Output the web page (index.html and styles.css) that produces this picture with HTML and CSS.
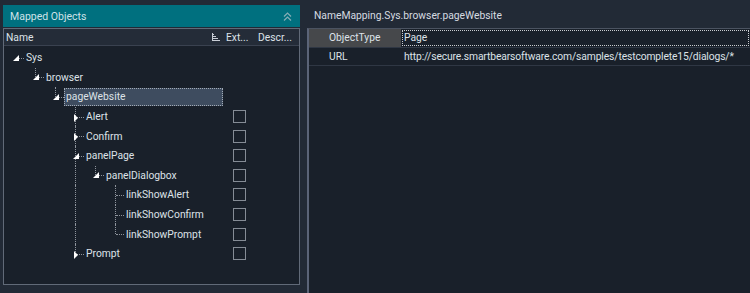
FILE: index.html
```html
<!DOCTYPE html>
<html lang="en">
<head>
    <meta charset="UTF-8">
    <title>Name Mapping</title>
    <link rel="stylesheet" href="styles.css">
</head>
<body>
    <div class="app">
        <section class="mapped">
            <div class="mapped-head">
                <span>Mapped Objects</span>
                <svg class="collapse" width="9" height="9" viewBox="0 0 9 9">
                    <polyline points="1,4.5 4.5,1 8,4.5" fill="none" stroke="#86aeb6" stroke-width="1.2"/>
                    <polyline points="1,8.5 4.5,5 8,8.5" fill="none" stroke="#86aeb6" stroke-width="1.2"/>
                </svg>
            </div>
            <div class="tree">
                <div class="cols">
                    <span class="col-name">Name
                        <svg class="sort" width="8" height="8" viewBox="0 0 8 8">
                            <path d="M0.5 0v8M0 7.5h8M0 5.5h6M0 3.5h4M0 1.5h2" stroke="#c9ced6" stroke-width="1" fill="none"/>
                        </svg>
                    </span>
                    <span class="col-ext">Ext...</span>
                    <span class="col-desc">Descr...</span>
                </div>
                <div class="rows">
                    <div class="row">
                        <span class="name">
                            <span class="g root"><svg class="exp" width="6" height="6"><polygon points="6,0 6,6 0,6" fill="#fff"/></svg></span>
                            <span class="label">Sys</span>
                        </span>
                    </div>
                    <div class="row">
                        <span class="name">
                            <span class="g"></span>
                            <span class="g elbow"><svg class="exp" width="6" height="6"><polygon points="6,0 6,6 0,6" fill="#fff"/></svg></span>
                            <span class="label">browser</span>
                        </span>
                    </div>
                    <div class="row">
                        <span class="name">
                            <span class="g"></span><span class="g"></span>
                            <span class="g elbow"><svg class="exp" width="6" height="6"><polygon points="6,0 6,6 0,6" fill="#fff"/></svg></span>
                            <span class="label selected">pageWebsite</span>
                        </span>
                    </div>
                    <div class="row">
                        <span class="name">
                            <span class="g"></span><span class="g"></span><span class="g"></span>
                            <span class="g tee"><svg class="exp" width="6" height="8"><polygon points="1,0 5,4 1,8" fill="#fff"/></svg></span>
                            <span class="label">Alert</span>
                        </span>
                        <span class="ext"><i class="chk"></i></span>
                    </div>
                    <div class="row">
                        <span class="name">
                            <span class="g"></span><span class="g"></span><span class="g"></span>
                            <span class="g tee"><svg class="exp" width="6" height="8"><polygon points="1,0 5,4 1,8" fill="#fff"/></svg></span>
                            <span class="label">Confirm</span>
                        </span>
                        <span class="ext"><i class="chk"></i></span>
                    </div>
                    <div class="row">
                        <span class="name">
                            <span class="g"></span><span class="g"></span><span class="g"></span>
                            <span class="g tee"><svg class="exp" width="6" height="6"><polygon points="6,0 6,6 0,6" fill="#fff"/></svg></span>
                            <span class="label">panelPage</span>
                        </span>
                        <span class="ext"><i class="chk"></i></span>
                    </div>
                    <div class="row">
                        <span class="name">
                            <span class="g"></span><span class="g"></span><span class="g"></span>
                            <span class="g pipe"></span>
                            <span class="g elbow"><svg class="exp" width="6" height="6"><polygon points="6,0 6,6 0,6" fill="#fff"/></svg></span>
                            <span class="label">panelDialogbox</span>
                        </span>
                        <span class="ext"><i class="chk"></i></span>
                    </div>
                    <div class="row">
                        <span class="name">
                            <span class="g"></span><span class="g"></span><span class="g"></span>
                            <span class="g pipe"></span><span class="g"></span>
                            <span class="g tee"></span>
                            <span class="label">linkShowAlert</span>
                        </span>
                        <span class="ext"><i class="chk"></i></span>
                    </div>
                    <div class="row">
                        <span class="name">
                            <span class="g"></span><span class="g"></span><span class="g"></span>
                            <span class="g pipe"></span><span class="g"></span>
                            <span class="g tee"></span>
                            <span class="label">linkShowConfirm</span>
                        </span>
                        <span class="ext"><i class="chk"></i></span>
                    </div>
                    <div class="row">
                        <span class="name">
                            <span class="g"></span><span class="g"></span><span class="g"></span>
                            <span class="g pipe"></span><span class="g"></span>
                            <span class="g elbow"></span>
                            <span class="label">linkShowPrompt</span>
                        </span>
                        <span class="ext"><i class="chk"></i></span>
                    </div>
                    <div class="row">
                        <span class="name">
                            <span class="g"></span><span class="g"></span><span class="g"></span>
                            <span class="g elbow"><svg class="exp" width="6" height="8"><polygon points="1,0 5,4 1,8" fill="#fff"/></svg></span>
                            <span class="label">Prompt</span>
                        </span>
                        <span class="ext"><i class="chk"></i></span>
                    </div>
                </div>
            </div>
        </section>

        <section class="props">
            <div class="props-title">NameMapping.Sys.browser.pageWebsite</div>
            <div class="grid">
                <div class="prow">
                    <span class="pname current">ObjectType</span>
                    <span class="pval focus">Page</span>
                </div>
                <div class="prow">
                    <span class="pname">URL</span>
                    <span class="pval url">http://secure.smartbearsoftware.com/samples/testcomplete15/dialogs/*</span>
                </div>
            </div>
        </section>
    </div>
</body>
</html>
```

FILE: styles.css
```css
body {
    margin: 0;
    background: #222a36;
    font-family: Roboto, "Open Sans", sans-serif;
    font-size: 10.3px;
    color: #dde2e8;
}
.app {
    display: flex;
    height: 293px;
    padding-top: 5px;
    box-sizing: border-box;
    overflow: hidden;
}

/* left: mapped objects tree */
.mapped {
    flex: none;
    width: 297px;
    margin-left: 3px;
    display: flex;
    flex-direction: column;
}
.mapped-head {
    height: 22px;
    background: #00707f;
    color: #cfe2e8;
    display: flex;
    align-items: center;
    justify-content: space-between;
    padding: 0 8px 0 7px;
    font-size: 10.5px;
    margin-bottom: 1px;
}
.tree {
    height: 257px;
    border: 1px solid #616a78;
    background: #19202a;
    box-sizing: border-box;
}
.cols {
    height: 16px;
    display: flex;
    align-items: center;
    background: #242c38;
    border-bottom: 1px solid #3a4250;
}
.col-name {
    width: 222px;
    padding-left: 2px;
    box-sizing: border-box;
    display: flex;
    align-items: center;
    justify-content: space-between;
}
.sort {
    margin-right: 6px;
}
.col-ext {
    width: 32px;
}
.rows {
    padding-top: 2px;
}
.row {
    height: 19.6px;
    display: flex;
}
.name {
    width: 220px;
    display: flex;
    align-items: center;
    height: 100%;
}
.g {
    width: 20px;
    height: 100%;
    flex: none;
    position: relative;
}
.g::before,
.g::after {
    content: "";
    position: absolute;
}
.pipe::before,
.tee::before {
    left: 11px;
    top: 0;
    bottom: 0;
    border-left: 1px dotted #8e949c;
}
.elbow::before {
    left: 11px;
    top: 0;
    height: 50%;
    border-left: 1px dotted #8e949c;
}
.root::after,
.tee::after,
.elbow::after {
    left: 12px;
    right: 0;
    top: 50%;
    border-top: 1px dotted #8e949c;
}
.exp {
    position: absolute;
    left: 9px;
    top: calc(50% - 3px);
    z-index: 1;
}
.label {
    padding: 0 2px;
    line-height: 17px;
    white-space: nowrap;
}
.label.selected {
    flex: 1;
    margin-right: 1px;
    background: #3e4c5f;
    outline: 1px dotted #a3abb6;
    outline-offset: -1px;
    line-height: 18px;
}
.ext {
    width: 31px;
    display: flex;
    align-items: center;
    padding-left: 9px;
    box-sizing: border-box;
}
.chk {
    width: 11px;
    height: 11px;
    border: 1px solid #858c96;
}

/* right: properties */
.props {
    flex: 1;
    min-width: 0;
    margin-left: 7px;
    display: flex;
    flex-direction: column;
    margin-top: -5px;
}
.props-title {
    height: 28px;
    line-height: 24px;
    padding: 4px 0 0 7px;
    box-sizing: border-box;
    color: #d6dbe1;
}
.grid {
    flex: 1;
    border-left: 2px solid #5b6478;
    border-top: 1px solid #4b5361;
    background: #19202a;
}
.prow {
    display: flex;
    height: 17px;
    border-bottom: 1px solid #2f3744;
    line-height: 17px;
}
.prow:first-child {
    height: 18px;
}
.pname {
    width: 92px;
    padding-left: 20px;
    box-sizing: border-box;
    flex: none;
}
.pname.current {
    background: #46484b;
}
.pval {
    flex: 1;
    padding-left: 3px;
    white-space: nowrap;
}
.pval.url {
    letter-spacing: -0.12px;
}
.pval.focus {
    outline: 1px dotted #c9ccd0;
    outline-offset: -2px;
}
```
